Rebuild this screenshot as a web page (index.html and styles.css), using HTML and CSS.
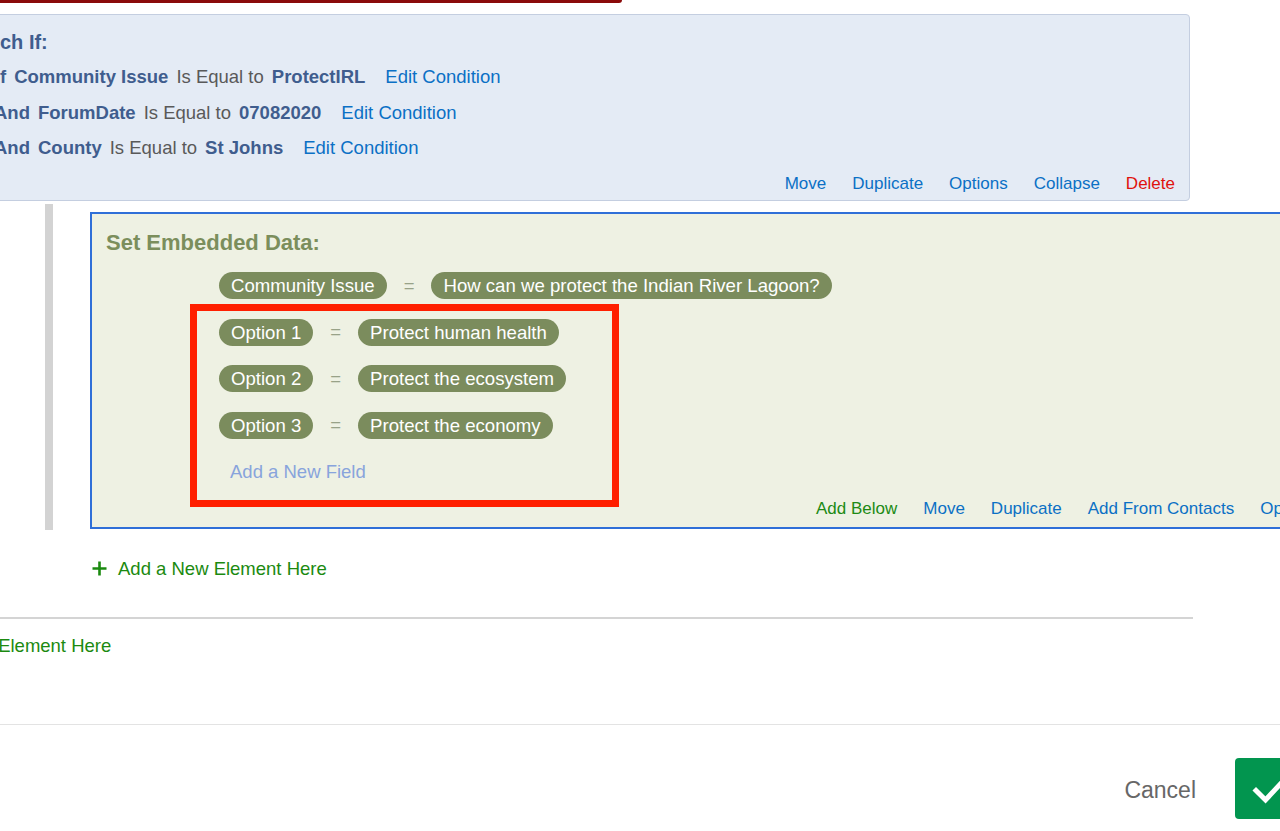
FILE: index.html
```html
<!DOCTYPE html>
<html lang="en">
<head>
<meta charset="utf-8">
<title>Survey Flow</title>
<link rel="stylesheet" href="styles.css">
</head>
<body>
<div class="page">
  <div class="topbar"></div>

  <section class="branch">
    <h2 class="branch-title"><span class="clip">Then Bran</span>ch If:</h2>
    <div class="conditions">
      <div class="cond">
        <span class="conj"><span class="clip">I</span>f</span>
        <span class="field">Community Issue</span>
        <span class="op">Is Equal to</span>
        <span class="val">ProtectIRL</span>
        <a class="link edit">Edit Condition</a>
      </div>
      <div class="cond and">
        <span class="conj">And</span>
        <span class="field">ForumDate</span>
        <span class="op">Is Equal to</span>
        <span class="val">07082020</span>
        <a class="link edit">Edit Condition</a>
      </div>
      <div class="cond and">
        <span class="conj">And</span>
        <span class="field">County</span>
        <span class="op">Is Equal to</span>
        <span class="val">St Johns</span>
        <a class="link edit">Edit Condition</a>
      </div>
    </div>
    <div class="actions">
      <a class="link">Move</a>
      <a class="link">Duplicate</a>
      <a class="link">Options</a>
      <a class="link">Collapse</a>
      <a class="link danger">Delete</a>
    </div>
  </section>

  <div class="nested">
    <div class="rail"></div>
    <section class="embedded">
      <h2 class="embedded-title">Set Embedded Data:</h2>
      <div class="fields">
        <div class="field-row">
          <span class="pill">Community Issue</span>
          <span class="eq">=</span>
          <span class="pill">How can we protect the Indian River Lagoon?</span>
        </div>
        <div class="field-row">
          <span class="pill">Option 1</span>
          <span class="eq">=</span>
          <span class="pill">Protect human health</span>
        </div>
        <div class="field-row">
          <span class="pill">Option 2</span>
          <span class="eq">=</span>
          <span class="pill">Protect the ecosystem</span>
        </div>
        <div class="field-row">
          <span class="pill">Option 3</span>
          <span class="eq">=</span>
          <span class="pill">Protect the economy</span>
        </div>
        <a class="add-field">Add a New Field</a>
      </div>
      <div class="actions green-actions">
        <a class="link add">Add Below</a>
        <a class="link">Move</a>
        <a class="link">Duplicate</a>
        <a class="link">Add From Contacts</a>
        <a class="link">Options</a>
        <a class="link">Collapse</a>
        <a class="link danger">Delete</a>
      </div>
      <div class="highlight"></div>
    </section>
  </div>

  <a class="add-element inner">
    <svg class="plus" width="15" height="15" viewBox="0 0 15 15" aria-hidden="true">
      <path d="M7.5 0.5V14.5M0.5 7.5H14.5" stroke="#1b8a10" stroke-width="2.6" fill="none"/>
    </svg>
    <span>Add a New Element Here</span>
  </a>

  <div class="divider"></div>

  <a class="add-element outer"><span class="clip">Add a New</span> Element Here</a>

  <footer class="footer">
    <a class="cancel">Cancel</a>
    <button class="save" aria-label="Save">
      <svg width="85" height="61" viewBox="0 0 85 61" aria-hidden="true">
        <path d="M21 32.5L30.5 42L49 22" stroke="#ffffff" stroke-width="5" fill="none" stroke-linecap="square"/>
      </svg>
    </button>
  </footer>
</div>
</body>
</html>
```

FILE: styles.css
```css
html, body {
  margin: 0;
  padding: 0;
  background: #ffffff;
}
body {
  font-family: "Liberation Sans", Arial, sans-serif;
  width: 1280px;
  height: 831px;
  overflow: hidden;
}
.page {
  width: 1280px;
  height: 831px;
  overflow: hidden;
  position: relative;
}
a { cursor: pointer; }

.topbar {
  width: 622px;
  height: 3px;
  background: #8a0a0a;
  border-bottom-right-radius: 3px;
}

.clip {
  display: inline-block;
  width: 0;
  direction: rtl;
  white-space: nowrap;
}

/* Branch box */
.branch {
  box-sizing: border-box;
  margin-top: 11px;
  margin-left: -40px;
  width: 1230px;
  background: #e4ebf5;
  border: 1px solid #c4cee0;
  border-radius: 4px;
  padding: 15px 14px 6px 39px;
}
.branch-title {
  margin: 0;
  font-size: 20px;
  line-height: 24px;
  font-weight: bold;
  color: #3f5d8e;
  white-space: nowrap;
}
.conditions {
  display: flex;
  flex-direction: column;
  gap: 11.5px;
  margin-top: 11px;
}
.cond {
  display: flex;
  align-items: baseline;
  gap: 8px;
  font-size: 18.5px;
  line-height: 24px;
  white-space: nowrap;
}
.cond.and .conj { margin-left: -6px; }
.conj, .field, .val {
  font-weight: bold;
  color: #3f5d8e;
}
.op { color: #595959; }
.link {
  color: #0b70c5;
  text-decoration: none;
}
.edit {
  margin-left: 12px;
}
.actions {
  display: flex;
  justify-content: flex-end;
  gap: 26px;
  font-size: 17px;
  line-height: 20px;
  margin-top: 14px;
  white-space: nowrap;
}
.link.danger { color: #e0120e; }
.link.add { color: #208a14; }

/* Nested area */
.nested {
  display: flex;
  margin-top: 3px;
}
.rail {
  flex: none;
  width: 8px;
  margin-left: 45px;
  background: #d3d3d3;
}
.embedded {
  position: relative;
  box-sizing: border-box;
  flex: none;
  width: 1405px;
  margin: 8px 0 1px 37px;
  background: #eef1e3;
  border: 2px solid #2f6fd8;
  padding: 17px 14px 8px 14px;
}
.embedded-title {
  margin: 0;
  font-size: 22px;
  line-height: 24px;
  font-weight: bold;
  color: #7b8e5c;
}
.fields {
  display: flex;
  flex-direction: column;
  align-items: flex-start;
  gap: 19.5px;
  margin-top: 17px;
  padding-left: 113px;
}
.field-row {
  display: flex;
  align-items: center;
  gap: 17px;
}
.pill {
  display: inline-block;
  height: 27px;
  line-height: 27px;
  padding: 0 12px;
  border-radius: 14px;
  background: #7b8c5d;
  color: #ffffff;
  font-size: 18.6px;
  white-space: nowrap;
}
.eq {
  color: #98a288;
  font-size: 18.5px;
}
.add-field {
  display: block;
  margin: 2px 0 0 11px;
  font-size: 18.5px;
  line-height: 24px;
  color: #88a4dc;
}
.green-actions {
  justify-content: flex-start;
  margin-top: 15px;
  padding-left: 710px;
}
.highlight {
  position: absolute;
  left: 98px;
  top: 90px;
  width: 429px;
  height: 203px;
  box-sizing: border-box;
  border: 7px solid #ff1f00;
  pointer-events: none;
}

/* Add element links */
.add-element {
  display: flex;
  align-items: center;
  gap: 11px;
  color: #1b8a10;
  font-size: 18.5px;
  line-height: 24px;
  white-space: nowrap;
}
.add-element.inner {
  margin: 27px 0 0 92px;
}
.add-element.inner .plus { flex: none; margin-top: -1px; }
.add-element.outer {
  display: block;
  margin-top: 15px;
  margin-left: -7px;
}
.divider {
  width: 1193px;
  height: 0;
  border-top: 2px solid #d4d4d4;
  margin-top: 36px;
}

/* Footer */
.footer {
  box-sizing: border-box;
  width: 1320px;
  margin-top: 66px;
  border-top: 1px solid #e3e3e3;
  padding-top: 33px;
  display: flex;
  justify-content: flex-end;
  align-items: center;
}
.cancel {
  color: #676767;
  font-size: 23px;
  margin-right: 39px;
  margin-top: 4px;
}
.save {
  width: 85px;
  height: 61px;
  padding: 0;
  border: 0;
  border-radius: 4px;
  background: #02954f;
  display: block;
}
.save svg { display: block; }
```
